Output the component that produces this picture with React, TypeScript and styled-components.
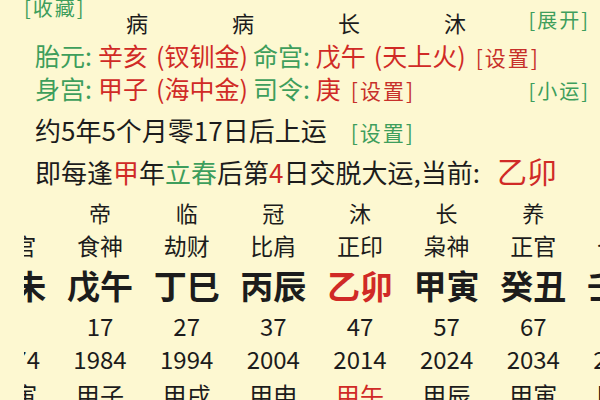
import React from "react";
import styled, { createGlobalStyle } from "styled-components";

const GREEN = "#3e9e5c";
const RED = "#d02a26";
const INK = "#1c1c1c";

const Global = createGlobalStyle`
  html, body {
    margin: 0;
    padding: 0;
    background: #fdf8d1;
    overflow: hidden;
  }
  body {
    width: 600px;
    height: 400px;
    font-family: "Noto Sans CJK SC", "Noto Sans", sans-serif;
    color: ${INK};
  }
`;

const Page = styled.div`
  width: 600px;
  height: 400px;
  padding-left: 24px;
  box-sizing: border-box;
  overflow: hidden;
`;

const TopRow = styled.div`
  display: flex;
  align-items: flex-start;
  height: 38px;
`;

const Link = styled.span<{ $size?: number; $tone?: "green" | "red" }>`
  font-size: ${(p) => p.$size ?? 20}px;
  letter-spacing: 2px;
  color: ${(p) => (p.$tone === "red" ? "#c7302a" : GREEN)};
  white-space: nowrap;
`;

const Fav = styled.div`
  width: 60px;
  margin-top: -3px;
  line-height: 22px;
`;

const StarCells = styled.div`
  display: flex;
  margin-top: 7px;
`;

const StarCell = styled.div`
  width: 106px;
  text-align: center;
  font-size: 22px;
  line-height: 30px;
`;

const Expand = styled.div`
  margin-left: auto;
  margin-right: 10px;
  margin-top: 8px;
  line-height: 24px;
`;

const InfoLine = styled.div<{ $h: number; $size: number }>`
  display: flex;
  align-items: baseline;
  padding-left: 11px;
  height: ${(p) => p.$h}px;
  line-height: ${(p) => p.$h}px;
  font-size: ${(p) => p.$size}px;
  white-space: pre;
`;

const Label = styled.span`
  color: ${GREEN};
`;
const Value = styled.span`
  color: ${RED};
`;
const Big = styled.span`
  color: ${RED};
  font-size: 30px;
`;
const Gap = styled.span<{ $w: number }>`
  display: inline-block;
  width: ${(p) => p.$w}px;
`;
const Right = styled.span`
  margin-left: auto;
  margin-right: 10px;
`;

const Clip = styled.div`
  margin-top: 10px;
  overflow: hidden;
  width: 576px;
`;

const Strip = styled.div`
  display: flex;
  margin-left: -54px;
`;

const Column = styled.div`
  flex: 0 0 86.67px;
  display: flex;
  flex-direction: column;
  align-items: center;
  white-space: nowrap;
`;

const Star = styled.div`
  height: 34px;
  line-height: 34px;
  font-size: 22px;
`;
const God = styled.div`
  height: 32px;
  line-height: 32px;
  font-size: 23px;
`;
const Pillar = styled.div<{ $hot?: boolean }>`
  height: 48px;
  line-height: 48px;
  font-size: 33px;
  font-weight: 700;
  color: ${(p) => (p.$hot ? RED : INK)};
`;
const Num = styled.div<{ $h: number }>`
  height: ${(p) => p.$h}px;
  line-height: ${(p) => p.$h}px;
  font-size: 24px;
`;
const Year = styled.div<{ $hot?: boolean }>`
  height: 40px;
  line-height: 40px;
  font-size: 24px;
  color: ${(p) => (p.$hot ? RED : INK)};
`;

const cols = [
  { star: "衰", god: "伤官", gz: "己未", age: "7", year: "1974", ln: "甲寅" },
  { star: "帝", god: "食神", gz: "戊午", age: "17", year: "1984", ln: "甲子" },
  { star: "临", god: "劫财", gz: "丁巳", age: "27", year: "1994", ln: "甲戌" },
  { star: "冠", god: "比肩", gz: "丙辰", age: "37", year: "2004", ln: "甲申" },
  { star: "沐", god: "正印", gz: "乙卯", age: "47", year: "2014", ln: "甲午", hot: true },
  { star: "长", god: "枭神", gz: "甲寅", age: "57", year: "2024", ln: "甲辰" },
  { star: "养", god: "正官", gz: "癸丑", age: "67", year: "2034", ln: "甲寅" },
  { star: "胎", god: "七杀", gz: "壬子", age: "77", year: "2044", ln: "甲子" },
];

export default function App() {
  return (
    <>
      <Global />
      <Page>
        <TopRow>
          <Fav>
            <Link>[收藏]</Link>
          </Fav>
          <StarCells>
            {["病", "病", "长", "沐"].map((s, i) => (
              <StarCell key={i}>{s}</StarCell>
            ))}
          </StarCells>
          <Expand>
            <Link>[展开]</Link>
          </Expand>
        </TopRow>

        <InfoLine $h={34} $size={25}>
          <Label>胎元:</Label>
          <Gap $w={6} />
          <Value>辛亥</Value>
          <Gap $w={8} />
          <Value>(钗钏金)</Value>
          <Gap $w={5} />
          <Label>命宫:</Label>
          <Gap $w={6} />
          <Value>戊午</Value>
          <Gap $w={8} />
          <Value>(天上火)</Value>
          <Gap $w={10} />
          <Link $size={21} $tone="red">[设置]</Link>
        </InfoLine>

        <InfoLine $h={33} $size={25}>
          <Label>身宫:</Label>
          <Gap $w={6} />
          <Value>甲子</Value>
          <Gap $w={8} />
          <Value>(海中金)</Value>
          <Gap $w={5} />
          <Label>司令:</Label>
          <Gap $w={6} />
          <Value>庚</Value>
          <Gap $w={10} />
          <Link $size={21} $tone="red">[设置]</Link>
          <Right>
            <Link>[小运]</Link>
          </Right>
        </InfoLine>

        <InfoLine $h={50} $size={26}>
          <span>约5年5个月零17日后上运</span>
          <Gap $w={24} />
          <Link $size={21}>[设置]</Link>
        </InfoLine>

        <InfoLine $h={30} $size={26}>
          <span>即每逢</span>
          <Value>甲</Value>
          <span>年</span>
          <Label>立春</Label>
          <span>后第</span>
          <Value>4</Value>
          <span>日交脱大运,当前:</span>
          <Gap $w={17} />
          <Big>乙卯</Big>
        </InfoLine>

        <Clip>
          <Strip>
            {cols.map((c, i) => (
              <Column key={i}>
                <Star>{c.star}</Star>
                <God>{c.god}</God>
                <Pillar $hot={c.hot}>{c.gz}</Pillar>
                <Num $h={34}>{c.age}</Num>
                <Num $h={32}>{c.year}</Num>
                <Year $hot={c.hot}>{c.ln}</Year>
              </Column>
            ))}
          </Strip>
        </Clip>
      </Page>
    </>
  );
}
